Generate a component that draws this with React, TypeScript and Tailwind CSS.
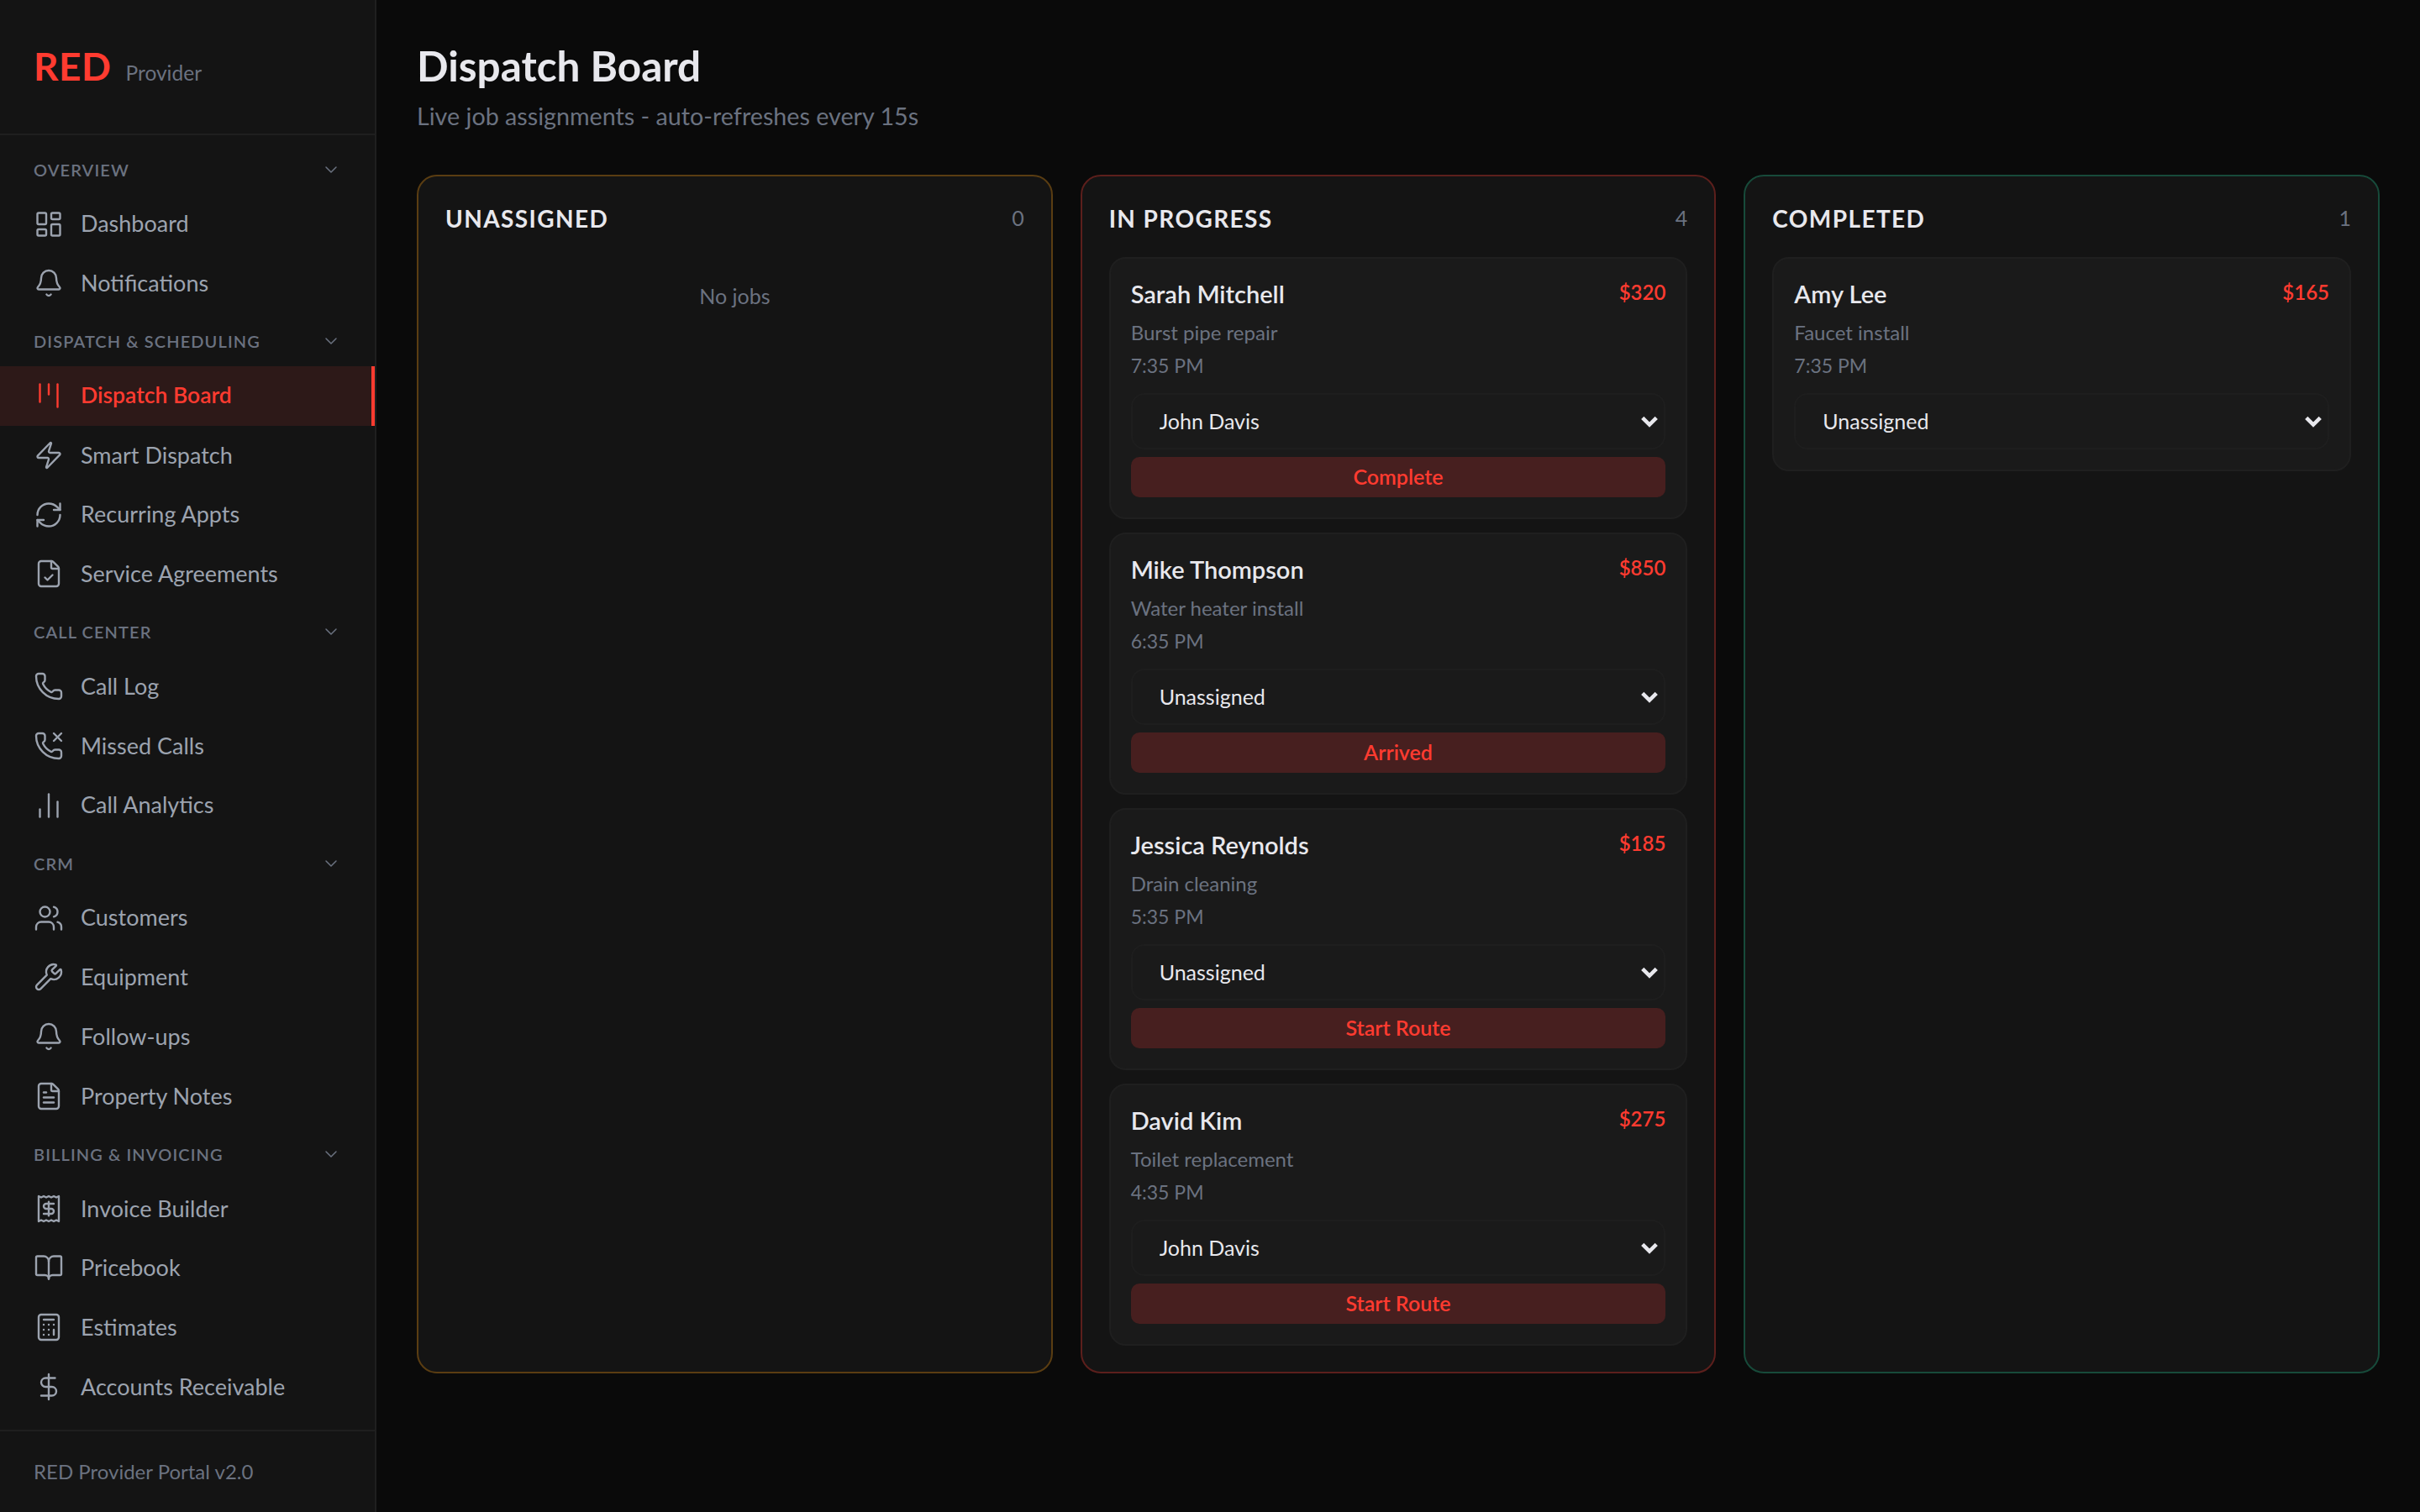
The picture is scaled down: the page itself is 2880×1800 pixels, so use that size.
import {
    BarChart2, Bell, BookOpen, Calculator, ChevronDown, DollarSign, FileCheck, FileText, Kanban,
    LayoutDashboard, Phone, PhoneMissed, Receipt, RefreshCw, Users, Wrench, Zap,
} from 'lucide-react';

const sections = [
    {title: 'OVERVIEW', items: [
        {label: 'Dashboard', icon: LayoutDashboard},
        {label: 'Notifications', icon: Bell},
    ]},
    {title: 'DISPATCH & SCHEDULING', items: [
        {label: 'Dispatch Board', icon: Kanban, active: true},
        {label: 'Smart Dispatch', icon: Zap},
        {label: 'Recurring Appts', icon: RefreshCw},
        {label: 'Service Agreements', icon: FileCheck},
    ]},
    {title: 'CALL CENTER', items: [
        {label: 'Call Log', icon: Phone},
        {label: 'Missed Calls', icon: PhoneMissed},
        {label: 'Call Analytics', icon: BarChart2},
    ]},
    {title: 'CRM', items: [
        {label: 'Customers', icon: Users},
        {label: 'Equipment', icon: Wrench},
        {label: 'Follow-ups', icon: Bell},
        {label: 'Property Notes', icon: FileText},
    ]},
    {title: 'BILLING & INVOICING', items: [
        {label: 'Invoice Builder', icon: Receipt},
        {label: 'Pricebook', icon: BookOpen},
        {label: 'Estimates', icon: Calculator},
        {label: 'Accounts Receivable', icon: DollarSign},
    ]},
];

const inProgress = [
    {name: 'Sarah Mitchell', price: '$320', job: 'Burst pipe repair', time: '7:35 PM', tech: 'John Davis', action: 'Complete'},
    {name: 'Mike Thompson', price: '$850', job: 'Water heater install', time: '6:35 PM', tech: 'Unassigned', action: 'Arrived'},
    {name: 'Jessica Reynolds', price: '$185', job: 'Drain cleaning', time: '5:35 PM', tech: 'Unassigned', action: 'Start Route'},
    {name: 'David Kim', price: '$275', job: 'Toilet replacement', time: '4:35 PM', tech: 'John Davis', action: 'Start Route'},
];

type Job = {name: string, price: string, job: string, time: string, tech: string, action?: string};

const Sidebar = () => {
    return (
        <aside className="w-[448px] h-full shrink-0 flex flex-col bg-[#141414] border-r-2 border-[#1f1f1f]">
            <div className="h-[161px] shrink-0 pl-10 pt-[49px] flex items-baseline gap-[17px] border-b-2 border-[#1f1f1f]">
                <span className="text-[46px] leading-[60px] font-bold tracking-[0.5px] text-[#ff3b30]">RED</span>
                <span className="text-[24.5px] text-[#6b7280]">Provider</span>
            </div>
            <nav className="flex-1 pt-[7px]">
                {sections.map(section => (
                    <div key={section.title}>
                        <div className="h-[63.3px] pl-10 pr-10 pt-[4px] flex items-center justify-between">
                            <span className="text-[20px] font-semibold tracking-[1.1px] text-[#6b7280]">{section.title}</span>
                            <ChevronDown size={24} strokeWidth={1.5} className="text-[#6b7280]" />
                        </div>
                        {section.items.map(item => (
                            <div
                                key={item.label}
                                className={item.active
                                    ? "h-[70.7px] pl-10 flex items-center gap-5 text-[26.5px] font-semibold text-[#ff3b30] bg-[#2d1918] border-r-4 border-[#ff3b30]"
                                    : "h-[70.7px] pl-10 flex items-center gap-5 text-[27px] text-[#9ca3af]"}
                            >
                                <item.icon size={36} strokeWidth={1.6} />
                                <span>{item.label}</span>
                            </div>
                        ))}
                    </div>
                ))}
            </nav>
            <div className="h-[98px] shrink-0 pl-10 flex items-center border-t-2 border-[#1f1f1f] text-[24px] text-[#6b7280]">
                RED Provider Portal v2.0
            </div>
        </aside>
    );
}

const JobCard = ({job}: {job: Job}) => {
    return (
        <div className="rounded-[20px] border-2 border-[#1f1f1f] bg-[#1a1a1a] p-6">
            <div className="flex justify-between">
                <span className="text-[29px] leading-9 font-semibold text-[#e8e8ed]">{job.name}</span>
                <span className="text-[24px] leading-8 font-semibold text-[#ff3b30]">{job.price}</span>
            </div>
            <div className="mt-[10px] text-[24px] leading-9 text-[#6b7280]">{job.job}</div>
            <div className="mt-[3px] text-[23px] leading-9 text-[#6b7280]">{job.time}</div>
            <div className="relative mt-[15px]">
                <select
                    defaultValue={job.tech}
                    className="w-full h-[67px] appearance-none rounded-[16px] border-2 border-[#1e1e1e] bg-[#1a1a1a] pl-8 text-[25px] text-[#e8e8ed]"
                >
                    <option>Unassigned</option>
                    <option>John Davis</option>
                </select>
                <svg viewBox="0 0 24 24" className="absolute right-[8px] top-[22px] w-[22px] h-[22px] text-[#e8e8ed]" fill="none" stroke="currentColor" strokeWidth="5">
                    <path d="M3 8l9 9 9-9" />
                </svg>
            </div>
            {job.action && (
                <button className="mt-[9px] w-full h-12 rounded-[10px] bg-[#471f1f] text-[25px] font-semibold text-[#ff3b30]">
                    {job.action}
                </button>
            )}
        </div>
    );
}

const Column = ({title, count, border, jobs}: {title: string, count: number, border: string, jobs: Job[]}) => {
    return (
        <section className={"h-[1427px] rounded-[24px] border-2 bg-[#141414] px-8 " + border}>
            <div className="h-[96px] flex items-center justify-between pt-[4px]">
                <span className="text-[28px] font-bold tracking-[1.4px] text-[#e8e8ed]">{title}</span>
                <span className="text-[25px] text-[#6b7280]">{count}</span>
            </div>
            {jobs.length === 0 && <div className="mt-[28px] text-center text-[25px] text-[#6b7280]">No jobs</div>}
            <div className="flex flex-col gap-4">
                {jobs.map(job => <JobCard key={job.name} job={job} />)}
            </div>
        </section>
    );
}

const App = () => {
    return (
        <div className="flex h-screen bg-[#0a0a0a] font-['Lato',sans-serif]">
            <Sidebar />
            <main className="flex-1 pl-[48px] pr-[48px] pt-[44px]">
                <h1 className="text-[49.5px] leading-[68px] font-bold text-[#e8e8ed]">Dispatch Board</h1>
                <p className="mt-[6px] text-[28.7px] leading-10 text-[#6b7280]">Live job assignments - auto-refreshes every 15s</p>
                <div className="mt-[50px] grid grid-cols-3 gap-[33px]">
                    <Column title="UNASSIGNED" count={0} border="border-[#5a3d12]" jobs={[]} />
                    <Column title="IN PROGRESS" count={4} border="border-[#5c1f1c]" jobs={inProgress} />
                    <Column title="COMPLETED" count={1} border="border-[#174a3a]" jobs={[{name: 'Amy Lee', price: '$165', job: 'Faucet install', time: '7:35 PM', tech: 'Unassigned'}]} />
                </div>
            </main>
        </div>
    );
}

export default App;
